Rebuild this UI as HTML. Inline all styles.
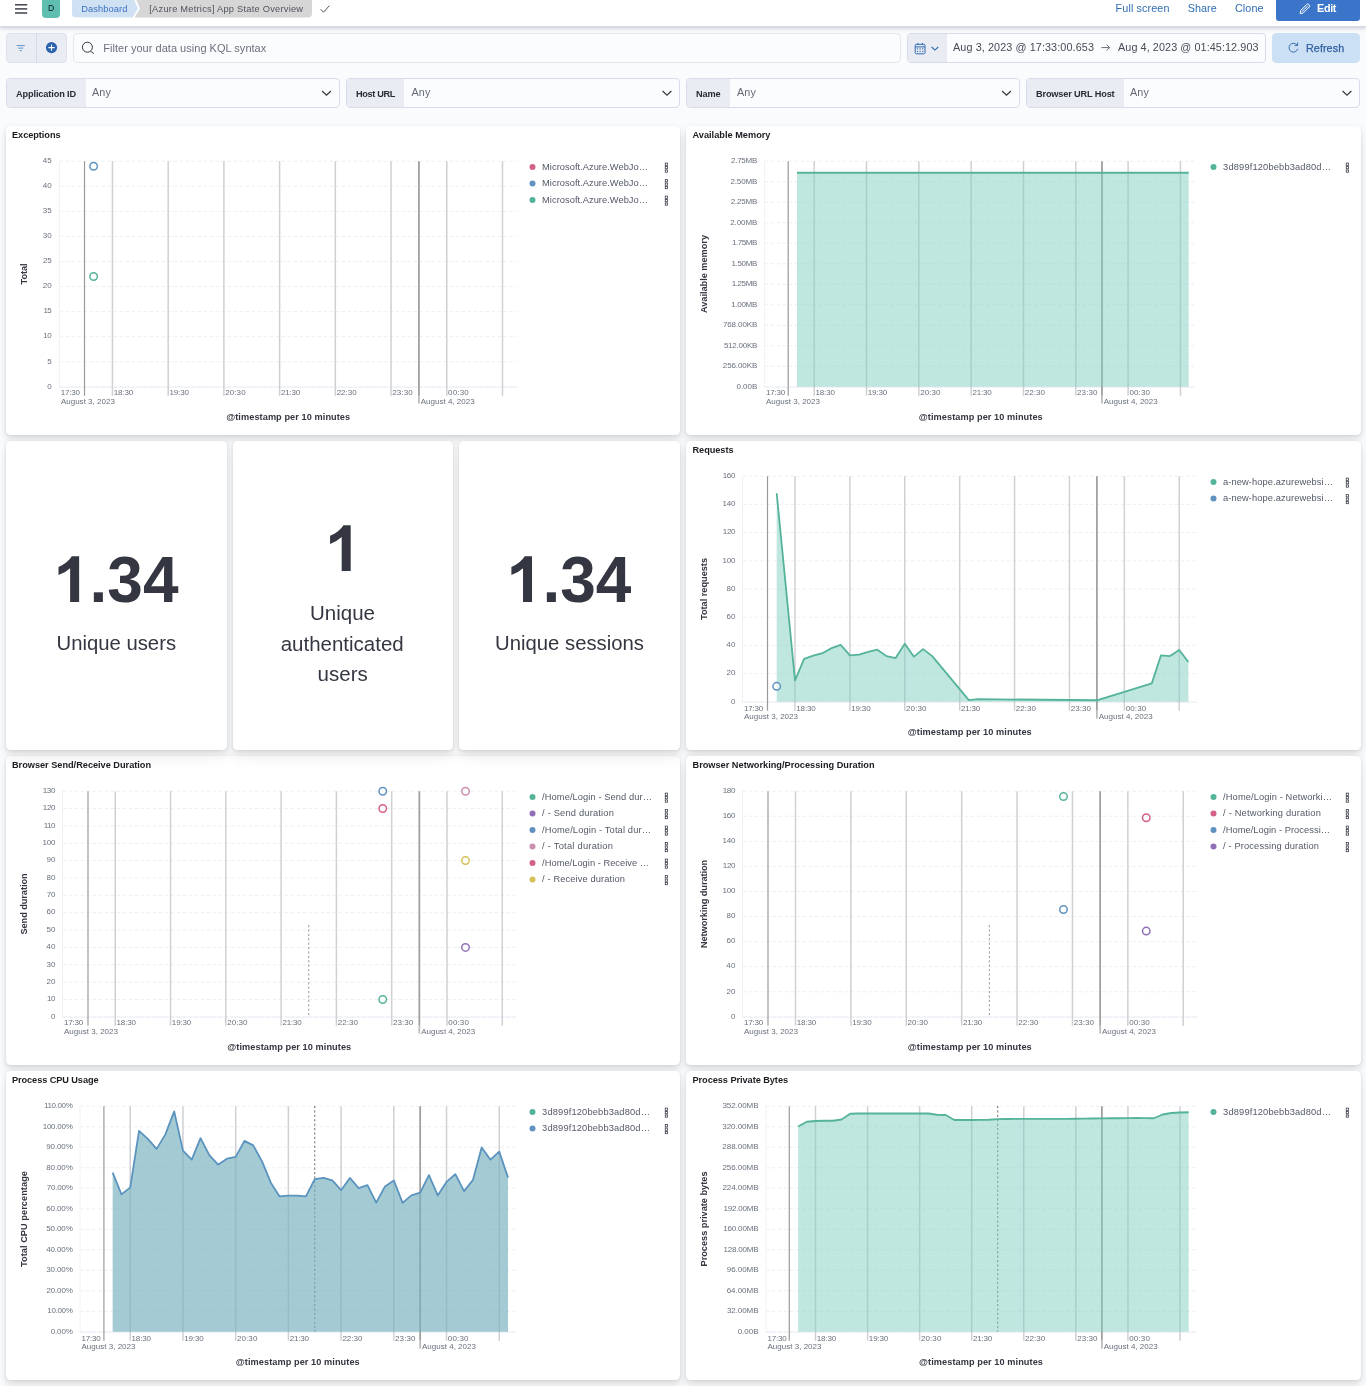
<!DOCTYPE html>
<html><head><meta charset="utf-8"><title>[Azure Metrics] App State Overview</title>
<style>
html,body{margin:0;padding:0}
body{width:1366px;height:1386px;position:relative;overflow:hidden;background:#fafbfd;font-family:"Liberation Sans",sans-serif}
.b{position:absolute;box-sizing:border-box}
.t{position:absolute;white-space:nowrap;margin:0;padding:0}
svg.g{position:absolute;left:0;top:0;overflow:hidden}
.tl{position:absolute;left:0;top:0;width:1366px;height:1386px;will-change:transform}
</style></head><body>
<div class="b" style="left:0px;top:0px;width:1366px;height:26.6px;background:#fff;border-bottom:1px solid #d3dae6;box-shadow:0 1px 3px rgba(60,70,100,.17),0 2px 5px rgba(60,70,100,.10);"></div>
<div class="b" style="left:42px;top:-4px;width:18px;height:22px;background:#5ebfb1;border-radius:4px;"></div>
<div class="b" style="left:1276px;top:-4px;width:84px;height:24.6px;background:#3a75c9;border-radius:3px;"></div>
<div class="b" style="left:6px;top:33px;width:60.6px;height:29.5px;background:#e9edf3;border-radius:4.5px;box-shadow:inset 0 0 0 1px rgba(17,43,134,.06);"></div>
<div class="b" style="left:36px;top:33px;width:1px;height:29.5px;background:#d3daea;"></div>
<div class="b" style="left:73px;top:33px;width:827.5px;height:29.5px;background:#fbfcfd;border-radius:4.5px;box-shadow:inset 0 0 0 1px #e3e7f0;"></div>
<div class="b" style="left:907px;top:33px;width:359px;height:29.5px;background:#fbfcfd;border-radius:4.5px;box-shadow:inset 0 0 0 1px #d6dcea;"></div>
<div class="b" style="left:908px;top:34px;width:39px;height:27.5px;background:#e9edf3;border-radius:3.5px 0 0 3.5px;"></div>
<div class="b" style="left:1272px;top:33px;width:88px;height:29.5px;background:#cce0f5;border-radius:4.5px;"></div>
<div class="b" style="left:6px;top:78px;width:333.5px;height:29.5px;background:#fbfcfd;border-radius:4.5px;box-shadow:inset 0 0 0 1px #d6dcea;"></div>
<div class="b" style="left:7px;top:79px;width:78.8px;height:27.5px;background:#e9edf3;border-radius:3.5px 0 0 3.5px;"></div>
<div class="b" style="left:346px;top:78px;width:334px;height:29.5px;background:#fbfcfd;border-radius:4.5px;box-shadow:inset 0 0 0 1px #d6dcea;"></div>
<div class="b" style="left:347px;top:79px;width:56.5px;height:27.5px;background:#e9edf3;border-radius:3.5px 0 0 3.5px;"></div>
<div class="b" style="left:686px;top:78px;width:333.5px;height:29.5px;background:#fbfcfd;border-radius:4.5px;box-shadow:inset 0 0 0 1px #d6dcea;"></div>
<div class="b" style="left:687px;top:79px;width:42.5px;height:27.5px;background:#e9edf3;border-radius:3.5px 0 0 3.5px;"></div>
<div class="b" style="left:1026px;top:78px;width:334px;height:29.5px;background:#fbfcfd;border-radius:4.5px;box-shadow:inset 0 0 0 1px #d6dcea;"></div>
<div class="b" style="left:1027px;top:79px;width:96.5px;height:27.5px;background:#e9edf3;border-radius:3.5px 0 0 3.5px;"></div>
<div class="b" style="left:6px;top:126px;width:674px;height:309px;background:#fff;border-radius:4.5px;box-shadow:0 .675px 3px -.75px rgba(0,0,0,.08),0 1.95px 6px -.75px rgba(0,0,0,.06),0 4.3px 9px -.75px rgba(0,0,0,.05),0 11.25px 11.25px -.75px rgba(0,0,0,.04);"></div>
<div class="b" style="left:686px;top:126px;width:675px;height:309px;background:#fff;border-radius:4.5px;box-shadow:0 .675px 3px -.75px rgba(0,0,0,.08),0 1.95px 6px -.75px rgba(0,0,0,.06),0 4.3px 9px -.75px rgba(0,0,0,.05),0 11.25px 11.25px -.75px rgba(0,0,0,.04);"></div>
<div class="b" style="left:686px;top:441px;width:675px;height:309px;background:#fff;border-radius:4.5px;box-shadow:0 .675px 3px -.75px rgba(0,0,0,.08),0 1.95px 6px -.75px rgba(0,0,0,.06),0 4.3px 9px -.75px rgba(0,0,0,.05),0 11.25px 11.25px -.75px rgba(0,0,0,.04);"></div>
<div class="b" style="left:6px;top:756px;width:674px;height:309px;background:#fff;border-radius:4.5px;box-shadow:0 .675px 3px -.75px rgba(0,0,0,.08),0 1.95px 6px -.75px rgba(0,0,0,.06),0 4.3px 9px -.75px rgba(0,0,0,.05),0 11.25px 11.25px -.75px rgba(0,0,0,.04);"></div>
<div class="b" style="left:686px;top:756px;width:675px;height:309px;background:#fff;border-radius:4.5px;box-shadow:0 .675px 3px -.75px rgba(0,0,0,.08),0 1.95px 6px -.75px rgba(0,0,0,.06),0 4.3px 9px -.75px rgba(0,0,0,.05),0 11.25px 11.25px -.75px rgba(0,0,0,.04);"></div>
<div class="b" style="left:6px;top:1071px;width:674px;height:309px;background:#fff;border-radius:4.5px;box-shadow:0 .675px 3px -.75px rgba(0,0,0,.08),0 1.95px 6px -.75px rgba(0,0,0,.06),0 4.3px 9px -.75px rgba(0,0,0,.05),0 11.25px 11.25px -.75px rgba(0,0,0,.04);"></div>
<div class="b" style="left:686px;top:1071px;width:675px;height:309px;background:#fff;border-radius:4.5px;box-shadow:0 .675px 3px -.75px rgba(0,0,0,.08),0 1.95px 6px -.75px rgba(0,0,0,.06),0 4.3px 9px -.75px rgba(0,0,0,.05),0 11.25px 11.25px -.75px rgba(0,0,0,.04);"></div>
<div class="b" style="left:6px;top:441px;width:221px;height:309px;background:#fff;border-radius:4.5px;box-shadow:0 .675px 3px -.75px rgba(0,0,0,.08),0 1.95px 6px -.75px rgba(0,0,0,.06),0 4.3px 9px -.75px rgba(0,0,0,.05),0 11.25px 11.25px -.75px rgba(0,0,0,.04);"></div>
<div class="b" style="left:233px;top:441px;width:220px;height:309px;background:#fff;border-radius:4.5px;box-shadow:0 .675px 3px -.75px rgba(0,0,0,.08),0 1.95px 6px -.75px rgba(0,0,0,.06),0 4.3px 9px -.75px rgba(0,0,0,.05),0 11.25px 11.25px -.75px rgba(0,0,0,.04);"></div>
<div class="b" style="left:459px;top:441px;width:221px;height:309px;background:#fff;border-radius:4.5px;box-shadow:0 .675px 3px -.75px rgba(0,0,0,.08),0 1.95px 6px -.75px rgba(0,0,0,.06),0 4.3px 9px -.75px rgba(0,0,0,.05),0 11.25px 11.25px -.75px rgba(0,0,0,.04);"></div>
<svg class="g" width="1366" height="1386" viewBox="0 0 1366 1386">
<rect x="15" y="4.1" width="12.2" height="1.4" fill="#343741"/>
<rect x="15" y="8.2" width="12.2" height="1.4" fill="#343741"/>
<rect x="15" y="12.3" width="12.2" height="1.4" fill="#343741"/>
<path d="M76 -4 H132.5 L138 8.5 L132.5 17.5 H76 a4 4 0 0 1 -4 -4 V0 Z" fill="#d1e1f4"/>
<path d="M134.5 -4 H308 a4 4 0 0 1 4 4 V13.5 a4 4 0 0 1 -4 4 H134.5 L140 8.5 Z" fill="#d6d6d6"/>
<path d="M320.6 9.2 L323.6 12.2 L329.4 5.6" fill="none" stroke="#4a4d57" stroke-width="0.95"/>
<g transform="translate(1299.6,3.2)" fill="none" stroke="#fff" stroke-width="1"><path d="M1 7.4 L7.2 1.2 a1.3 1.3 0 0 1 1.9 0 l0.6 0.6 a1.3 1.3 0 0 1 0 1.9 L3.5 9.9 L0.6 10.4 Z"/><path d="M2.2 8.6 L8.2 2.6"/></g>
<rect x="16.6" y="45.1" width="8.2" height="1" fill="#5a93d0"/>
<rect x="18.2" y="47.6" width="5" height="1" fill="#5a93d0"/>
<rect x="19.7" y="50.1" width="2.1" height="1" fill="#5a93d0"/>
<circle cx="51.5" cy="47.6" r="5.6" fill="#2b62ad"/><path d="M48.3 47.6 H54.7 M51.5 44.4 V50.8" stroke="#fff" stroke-width="1.1"/>
<circle cx="87.4" cy="47.2" r="5" fill="none" stroke="#343741" stroke-width="1"/><path d="M90.6 51.2 L93.8 53.6" stroke="#343741" stroke-width="1"/>
<g fill="none" stroke="#2c66b2" stroke-width="1"><rect x="915.2" y="44.3" width="9.8" height="9.5" rx="1.3"/><path d="M915.2 46.9 H925 M917.7 43 V44.5 M922.5 43 V44.5"/></g>
<rect x="916.9" y="48.35" width="1.2" height="1.1" fill="#2c66b2"/>
<rect x="916.9" y="50.85" width="1.2" height="1.1" fill="#2c66b2"/>
<rect x="919.5" y="48.35" width="1.2" height="1.1" fill="#2c66b2"/>
<rect x="919.5" y="50.85" width="1.2" height="1.1" fill="#2c66b2"/>
<rect x="922.1" y="48.35" width="1.2" height="1.1" fill="#2c66b2"/>
<rect x="922.1" y="50.85" width="1.2" height="1.1" fill="#2c66b2"/>
<path d="M931.6 47 L934.9 50.1 L938.2 47" fill="none" stroke="#2c66b2" stroke-width="1.1"/>
<path d="M1101.5 47.6 H1109.5 M1106.6 44.6 L1109.6 47.6 L1106.6 50.6" fill="none" stroke="#555b68" stroke-width="0.9"/>
<g fill="none" stroke="#3a6fae" stroke-width="1"><path d="M1297.2 45.4 A4.4 4.4 0 1 0 1297.7 48.8"/><path d="M1294.6 45.6 H1297.6 V42.6"/></g>
<path d="M322.1 91 L326.5 95.2 L330.9 91" fill="none" stroke="#343741" stroke-width="1.2"/>
<path d="M662.6 91 L667 95.2 L671.4 91" fill="none" stroke="#343741" stroke-width="1.2"/>
<path d="M1002.1 91 L1006.5 95.2 L1010.9 91" fill="none" stroke="#343741" stroke-width="1.2"/>
<path d="M1342.6 91 L1347 95.2 L1351.4 91" fill="none" stroke="#343741" stroke-width="1.2"/>
<path d="M79.13 602.10 L70.13 602.10 L70.13 568.19 Q65.19 572.82 58.50 575.04 L58.50 566.88 Q62.03 565.73 66.16 562.51 Q70.28 559.29 71.81 556.29 L79.13 556.29 Z" fill="#343741"/>
<path d="M350.69 571.00 L341.69 571.00 L341.69 537.09 Q336.75 541.72 330.06 543.94 L330.06 535.78 Q333.59 534.62 337.72 531.41 Q341.84 528.19 343.38 525.19 L350.69 525.19 Z" fill="#343741"/>
<path d="M532.03 602.10 L523.03 602.10 L523.03 568.19 Q518.09 572.82 511.40 575.04 L511.40 566.88 Q514.93 565.73 519.06 562.51 Q523.18 559.29 524.71 556.29 L532.03 556.29 Z" fill="#343741"/>
<path d="M59.4 386.8 H517" stroke="#e9ebf3" stroke-width="0.8" stroke-dasharray="3.6 2.4" fill="none"/>
<path d="M59.4 361.733 H517" stroke="#e9ebf3" stroke-width="0.8" stroke-dasharray="3.6 2.4" fill="none"/>
<path d="M59.4 336.667 H517" stroke="#e9ebf3" stroke-width="0.8" stroke-dasharray="3.6 2.4" fill="none"/>
<path d="M59.4 311.6 H517" stroke="#e9ebf3" stroke-width="0.8" stroke-dasharray="3.6 2.4" fill="none"/>
<path d="M59.4 286.533 H517" stroke="#e9ebf3" stroke-width="0.8" stroke-dasharray="3.6 2.4" fill="none"/>
<path d="M59.4 261.467 H517" stroke="#e9ebf3" stroke-width="0.8" stroke-dasharray="3.6 2.4" fill="none"/>
<path d="M59.4 236.4 H517" stroke="#e9ebf3" stroke-width="0.8" stroke-dasharray="3.6 2.4" fill="none"/>
<path d="M59.4 211.333 H517" stroke="#e9ebf3" stroke-width="0.8" stroke-dasharray="3.6 2.4" fill="none"/>
<path d="M59.4 186.267 H517" stroke="#e9ebf3" stroke-width="0.8" stroke-dasharray="3.6 2.4" fill="none"/>
<path d="M59.4 161.2 H517" stroke="#e9ebf3" stroke-width="0.8" stroke-dasharray="3.6 2.4" fill="none"/>
<path d="M59.4 161.2 V386.8" stroke="#f0f2f8" stroke-width="1"/>
<path d="M59.4 387.2 H517" stroke="#eceef6" stroke-width="1"/>
<path d="M112.45 161.2 V395.7" stroke="#d0d0d3" stroke-width="1.5"/>
<path d="M168.17 161.2 V395.7" stroke="#d0d0d3" stroke-width="1.5"/>
<path d="M223.89 161.2 V395.7" stroke="#d0d0d3" stroke-width="1.5"/>
<path d="M279.61 161.2 V395.7" stroke="#d0d0d3" stroke-width="1.5"/>
<path d="M335.33 161.2 V395.7" stroke="#d0d0d3" stroke-width="1.5"/>
<path d="M391.05 161.2 V395.7" stroke="#d0d0d3" stroke-width="1.5"/>
<path d="M446.77 161.2 V395.7" stroke="#d0d0d3" stroke-width="1.5"/>
<path d="M502.49 161.2 V395.7" stroke="#d0d0d3" stroke-width="1.5"/>
<path d="M84.5 161.2 V395.7" stroke="#9a9a9a" stroke-width="1.2"/>
<path d="M418.91 161.2 V395.7" stroke="#a0a0a0" stroke-width="1.8"/>
<path d="M418.91 395.7 V403.6" stroke="#bdbdbd" stroke-width="1.8"/>
<circle cx="532.5" cy="166.9" r="3" fill="#d36086"/>
<rect x="665.25" y="163.1" width="2.3" height="2.3" fill="none" stroke="#3d404b" stroke-width="0.8"/>
<rect x="665.25" y="166.5" width="2.3" height="2.3" fill="none" stroke="#3d404b" stroke-width="0.8"/>
<rect x="665.25" y="169.9" width="2.3" height="2.3" fill="none" stroke="#3d404b" stroke-width="0.8"/>
<circle cx="532.5" cy="183.4" r="3" fill="#6092c0"/>
<rect x="665.25" y="179.6" width="2.3" height="2.3" fill="none" stroke="#3d404b" stroke-width="0.8"/>
<rect x="665.25" y="183" width="2.3" height="2.3" fill="none" stroke="#3d404b" stroke-width="0.8"/>
<rect x="665.25" y="186.4" width="2.3" height="2.3" fill="none" stroke="#3d404b" stroke-width="0.8"/>
<circle cx="532.5" cy="199.9" r="3" fill="#54b399"/>
<rect x="665.25" y="196.1" width="2.3" height="2.3" fill="none" stroke="#3d404b" stroke-width="0.8"/>
<rect x="665.25" y="199.5" width="2.3" height="2.3" fill="none" stroke="#3d404b" stroke-width="0.8"/>
<rect x="665.25" y="202.9" width="2.3" height="2.3" fill="none" stroke="#3d404b" stroke-width="0.8"/>
<circle cx="93.6" cy="166.228" r="3.75" fill="#fff" fill-opacity="0.6" stroke="#6092c0" stroke-width="1.5"/>
<circle cx="93.6" cy="276.514" r="3.75" fill="#fff" fill-opacity="0.6" stroke="#54b399" stroke-width="1.5"/>
<path d="M764.5 386.8 H1194.5" stroke="#e9ebf3" stroke-width="0.8" stroke-dasharray="3.6 2.4" fill="none"/>
<path d="M764.5 366.291 H1194.5" stroke="#e9ebf3" stroke-width="0.8" stroke-dasharray="3.6 2.4" fill="none"/>
<path d="M764.5 345.782 H1194.5" stroke="#e9ebf3" stroke-width="0.8" stroke-dasharray="3.6 2.4" fill="none"/>
<path d="M764.5 325.273 H1194.5" stroke="#e9ebf3" stroke-width="0.8" stroke-dasharray="3.6 2.4" fill="none"/>
<path d="M764.5 304.764 H1194.5" stroke="#e9ebf3" stroke-width="0.8" stroke-dasharray="3.6 2.4" fill="none"/>
<path d="M764.5 284.255 H1194.5" stroke="#e9ebf3" stroke-width="0.8" stroke-dasharray="3.6 2.4" fill="none"/>
<path d="M764.5 263.745 H1194.5" stroke="#e9ebf3" stroke-width="0.8" stroke-dasharray="3.6 2.4" fill="none"/>
<path d="M764.5 243.236 H1194.5" stroke="#e9ebf3" stroke-width="0.8" stroke-dasharray="3.6 2.4" fill="none"/>
<path d="M764.5 222.727 H1194.5" stroke="#e9ebf3" stroke-width="0.8" stroke-dasharray="3.6 2.4" fill="none"/>
<path d="M764.5 202.218 H1194.5" stroke="#e9ebf3" stroke-width="0.8" stroke-dasharray="3.6 2.4" fill="none"/>
<path d="M764.5 181.709 H1194.5" stroke="#e9ebf3" stroke-width="0.8" stroke-dasharray="3.6 2.4" fill="none"/>
<path d="M764.5 161.2 H1194.5" stroke="#e9ebf3" stroke-width="0.8" stroke-dasharray="3.6 2.4" fill="none"/>
<path d="M764.5 161.2 V386.8" stroke="#f0f2f8" stroke-width="1"/>
<path d="M764.5 387.2 H1194.5" stroke="#eceef6" stroke-width="1"/>
<path d="M814.2 161.2 V395.7" stroke="#d0d0d3" stroke-width="1.5"/>
<path d="M866.52 161.2 V395.7" stroke="#d0d0d3" stroke-width="1.5"/>
<path d="M918.84 161.2 V395.7" stroke="#d0d0d3" stroke-width="1.5"/>
<path d="M971.16 161.2 V395.7" stroke="#d0d0d3" stroke-width="1.5"/>
<path d="M1023.48 161.2 V395.7" stroke="#d0d0d3" stroke-width="1.5"/>
<path d="M1075.8 161.2 V395.7" stroke="#d0d0d3" stroke-width="1.5"/>
<path d="M1128.12 161.2 V395.7" stroke="#d0d0d3" stroke-width="1.5"/>
<path d="M1180.44 161.2 V395.7" stroke="#d0d0d3" stroke-width="1.5"/>
<path d="M788.2 161.2 V395.7" stroke="#9a9a9a" stroke-width="1.2"/>
<path d="M1101.96 161.2 V395.7" stroke="#a0a0a0" stroke-width="1.8"/>
<path d="M1101.96 395.7 V403.6" stroke="#bdbdbd" stroke-width="1.8"/>
<path d="M797.00 172.75 L1188.70 172.75 L1188.70 386.80 L797.00 386.80 Z" fill="rgba(127,207,191,.5)"/><path d="M797.00 172.75 L1188.70 172.75" fill="none" stroke="#54b399" stroke-width="1.8" stroke-linejoin="round"/>
<circle cx="1213.5" cy="166.9" r="3" fill="#54b399"/>
<rect x="1346.25" y="163.1" width="2.3" height="2.3" fill="none" stroke="#3d404b" stroke-width="0.8"/>
<rect x="1346.25" y="166.5" width="2.3" height="2.3" fill="none" stroke="#3d404b" stroke-width="0.8"/>
<rect x="1346.25" y="169.9" width="2.3" height="2.3" fill="none" stroke="#3d404b" stroke-width="0.8"/>
<path d="M742.5 701.8 H1197" stroke="#e9ebf3" stroke-width="0.8" stroke-dasharray="3.6 2.4" fill="none"/>
<path d="M742.5 673.6 H1197" stroke="#e9ebf3" stroke-width="0.8" stroke-dasharray="3.6 2.4" fill="none"/>
<path d="M742.5 645.4 H1197" stroke="#e9ebf3" stroke-width="0.8" stroke-dasharray="3.6 2.4" fill="none"/>
<path d="M742.5 617.2 H1197" stroke="#e9ebf3" stroke-width="0.8" stroke-dasharray="3.6 2.4" fill="none"/>
<path d="M742.5 589 H1197" stroke="#e9ebf3" stroke-width="0.8" stroke-dasharray="3.6 2.4" fill="none"/>
<path d="M742.5 560.8 H1197" stroke="#e9ebf3" stroke-width="0.8" stroke-dasharray="3.6 2.4" fill="none"/>
<path d="M742.5 532.6 H1197" stroke="#e9ebf3" stroke-width="0.8" stroke-dasharray="3.6 2.4" fill="none"/>
<path d="M742.5 504.4 H1197" stroke="#e9ebf3" stroke-width="0.8" stroke-dasharray="3.6 2.4" fill="none"/>
<path d="M742.5 476.2 H1197" stroke="#e9ebf3" stroke-width="0.8" stroke-dasharray="3.6 2.4" fill="none"/>
<path d="M742.5 476.2 V701.8" stroke="#f0f2f8" stroke-width="1"/>
<path d="M742.5 702.2 H1197" stroke="#eceef6" stroke-width="1"/>
<path d="M795 476.2 V710.7" stroke="#d0d0d3" stroke-width="1.5"/>
<path d="M849.89 476.2 V710.7" stroke="#d0d0d3" stroke-width="1.5"/>
<path d="M904.78 476.2 V710.7" stroke="#d0d0d3" stroke-width="1.5"/>
<path d="M959.67 476.2 V710.7" stroke="#d0d0d3" stroke-width="1.5"/>
<path d="M1014.56 476.2 V710.7" stroke="#d0d0d3" stroke-width="1.5"/>
<path d="M1069.45 476.2 V710.7" stroke="#d0d0d3" stroke-width="1.5"/>
<path d="M1124.34 476.2 V710.7" stroke="#d0d0d3" stroke-width="1.5"/>
<path d="M1179.23 476.2 V710.7" stroke="#d0d0d3" stroke-width="1.5"/>
<path d="M767.5 476.2 V710.7" stroke="#9a9a9a" stroke-width="1.2"/>
<path d="M1096.89 476.2 V710.7" stroke="#a0a0a0" stroke-width="1.8"/>
<path d="M1096.89 710.7 V718.6" stroke="#bdbdbd" stroke-width="1.8"/>
<path d="M776.70 493.27 L795.00 680.31 L804.15 658.93 L813.30 655.70 L822.45 653.17 L831.59 648.10 L840.74 644.87 L849.89 655.42 L859.04 654.71 L868.19 651.90 L877.34 649.65 L886.48 656.12 L895.63 658.09 L904.78 643.74 L913.93 656.68 L923.08 649.09 L932.23 656.12 L968.82 700.13 L977.97 699.15 L1096.89 700.27 L1151.79 683.40 L1160.93 655.42 L1170.08 656.12 L1179.23 649.93 L1188.38 662.02 L1188.38 701.80 L776.70 701.80 Z" fill="rgba(127,207,191,.5)"/><path d="M776.70 493.27 L795.00 680.31 L804.15 658.93 L813.30 655.70 L822.45 653.17 L831.59 648.10 L840.74 644.87 L849.89 655.42 L859.04 654.71 L868.19 651.90 L877.34 649.65 L886.48 656.12 L895.63 658.09 L904.78 643.74 L913.93 656.68 L923.08 649.09 L932.23 656.12 L968.82 700.13 L977.97 699.15 L1096.89 700.27 L1151.79 683.40 L1160.93 655.42 L1170.08 656.12 L1179.23 649.93 L1188.38 662.02" fill="none" stroke="#54b399" stroke-width="1.8" stroke-linejoin="round"/>
<circle cx="776.7" cy="686.331" r="3.75" fill="#fff" fill-opacity="0.6" stroke="#6092c0" stroke-width="1.5"/>
<circle cx="1213.5" cy="481.9" r="3" fill="#54b399"/>
<rect x="1346.25" y="478.1" width="2.3" height="2.3" fill="none" stroke="#3d404b" stroke-width="0.8"/>
<rect x="1346.25" y="481.5" width="2.3" height="2.3" fill="none" stroke="#3d404b" stroke-width="0.8"/>
<rect x="1346.25" y="484.9" width="2.3" height="2.3" fill="none" stroke="#3d404b" stroke-width="0.8"/>
<circle cx="1213.5" cy="498.4" r="3" fill="#6092c0"/>
<rect x="1346.25" y="494.6" width="2.3" height="2.3" fill="none" stroke="#3d404b" stroke-width="0.8"/>
<rect x="1346.25" y="498" width="2.3" height="2.3" fill="none" stroke="#3d404b" stroke-width="0.8"/>
<rect x="1346.25" y="501.4" width="2.3" height="2.3" fill="none" stroke="#3d404b" stroke-width="0.8"/>
<path d="M62.5 1016.8 H516" stroke="#e9ebf3" stroke-width="0.8" stroke-dasharray="3.6 2.4" fill="none"/>
<path d="M62.5 999.446 H516" stroke="#e9ebf3" stroke-width="0.8" stroke-dasharray="3.6 2.4" fill="none"/>
<path d="M62.5 982.092 H516" stroke="#e9ebf3" stroke-width="0.8" stroke-dasharray="3.6 2.4" fill="none"/>
<path d="M62.5 964.738 H516" stroke="#e9ebf3" stroke-width="0.8" stroke-dasharray="3.6 2.4" fill="none"/>
<path d="M62.5 947.385 H516" stroke="#e9ebf3" stroke-width="0.8" stroke-dasharray="3.6 2.4" fill="none"/>
<path d="M62.5 930.031 H516" stroke="#e9ebf3" stroke-width="0.8" stroke-dasharray="3.6 2.4" fill="none"/>
<path d="M62.5 912.677 H516" stroke="#e9ebf3" stroke-width="0.8" stroke-dasharray="3.6 2.4" fill="none"/>
<path d="M62.5 895.323 H516" stroke="#e9ebf3" stroke-width="0.8" stroke-dasharray="3.6 2.4" fill="none"/>
<path d="M62.5 877.969 H516" stroke="#e9ebf3" stroke-width="0.8" stroke-dasharray="3.6 2.4" fill="none"/>
<path d="M62.5 860.615 H516" stroke="#e9ebf3" stroke-width="0.8" stroke-dasharray="3.6 2.4" fill="none"/>
<path d="M62.5 843.262 H516" stroke="#e9ebf3" stroke-width="0.8" stroke-dasharray="3.6 2.4" fill="none"/>
<path d="M62.5 825.908 H516" stroke="#e9ebf3" stroke-width="0.8" stroke-dasharray="3.6 2.4" fill="none"/>
<path d="M62.5 808.554 H516" stroke="#e9ebf3" stroke-width="0.8" stroke-dasharray="3.6 2.4" fill="none"/>
<path d="M62.5 791.2 H516" stroke="#e9ebf3" stroke-width="0.8" stroke-dasharray="3.6 2.4" fill="none"/>
<path d="M62.5 791.2 V1016.8" stroke="#f0f2f8" stroke-width="1"/>
<path d="M62.5 1017.2 H516" stroke="#eceef6" stroke-width="1"/>
<path d="M115.25 791.2 V1025.7" stroke="#d0d0d3" stroke-width="1.5"/>
<path d="M170.54 791.2 V1025.7" stroke="#d0d0d3" stroke-width="1.5"/>
<path d="M225.83 791.2 V1025.7" stroke="#d0d0d3" stroke-width="1.5"/>
<path d="M281.12 791.2 V1025.7" stroke="#d0d0d3" stroke-width="1.5"/>
<path d="M336.41 791.2 V1025.7" stroke="#d0d0d3" stroke-width="1.5"/>
<path d="M391.7 791.2 V1025.7" stroke="#d0d0d3" stroke-width="1.5"/>
<path d="M446.99 791.2 V1025.7" stroke="#d0d0d3" stroke-width="1.5"/>
<path d="M502.28 791.2 V1025.7" stroke="#d0d0d3" stroke-width="1.5"/>
<path d="M88 791.2 V1025.7" stroke="#9a9a9a" stroke-width="1.2"/>
<path d="M419.345 791.2 V1025.7" stroke="#a0a0a0" stroke-width="1.8"/>
<path d="M419.345 1025.7 V1033.6" stroke="#bdbdbd" stroke-width="1.8"/>
<path d="M308.765 925 V1016.8" stroke="#999" stroke-width="1" stroke-dasharray="2.2 2.2"/>
<circle cx="382.75" cy="791.2" r="3.75" fill="#fff" fill-opacity="0.6" stroke="#6092c0" stroke-width="1.5"/>
<circle cx="382.75" cy="808.554" r="3.75" fill="#fff" fill-opacity="0.6" stroke="#d36086" stroke-width="1.5"/>
<circle cx="382.75" cy="999.446" r="3.75" fill="#fff" fill-opacity="0.6" stroke="#54b399" stroke-width="1.5"/>
<circle cx="465.5" cy="791.2" r="3.75" fill="#fff" fill-opacity="0.6" stroke="#ca8eae" stroke-width="1.5"/>
<circle cx="465.5" cy="860.615" r="3.75" fill="#fff" fill-opacity="0.6" stroke="#d6bf57" stroke-width="1.5"/>
<circle cx="465.5" cy="947.385" r="3.75" fill="#fff" fill-opacity="0.6" stroke="#9170b8" stroke-width="1.5"/>
<circle cx="532.5" cy="796.9" r="3" fill="#54b399"/>
<rect x="665.25" y="793.1" width="2.3" height="2.3" fill="none" stroke="#3d404b" stroke-width="0.8"/>
<rect x="665.25" y="796.5" width="2.3" height="2.3" fill="none" stroke="#3d404b" stroke-width="0.8"/>
<rect x="665.25" y="799.9" width="2.3" height="2.3" fill="none" stroke="#3d404b" stroke-width="0.8"/>
<circle cx="532.5" cy="813.4" r="3" fill="#9170b8"/>
<rect x="665.25" y="809.6" width="2.3" height="2.3" fill="none" stroke="#3d404b" stroke-width="0.8"/>
<rect x="665.25" y="813" width="2.3" height="2.3" fill="none" stroke="#3d404b" stroke-width="0.8"/>
<rect x="665.25" y="816.4" width="2.3" height="2.3" fill="none" stroke="#3d404b" stroke-width="0.8"/>
<circle cx="532.5" cy="829.9" r="3" fill="#6092c0"/>
<rect x="665.25" y="826.1" width="2.3" height="2.3" fill="none" stroke="#3d404b" stroke-width="0.8"/>
<rect x="665.25" y="829.5" width="2.3" height="2.3" fill="none" stroke="#3d404b" stroke-width="0.8"/>
<rect x="665.25" y="832.9" width="2.3" height="2.3" fill="none" stroke="#3d404b" stroke-width="0.8"/>
<circle cx="532.5" cy="846.4" r="3" fill="#ca8eae"/>
<rect x="665.25" y="842.6" width="2.3" height="2.3" fill="none" stroke="#3d404b" stroke-width="0.8"/>
<rect x="665.25" y="846" width="2.3" height="2.3" fill="none" stroke="#3d404b" stroke-width="0.8"/>
<rect x="665.25" y="849.4" width="2.3" height="2.3" fill="none" stroke="#3d404b" stroke-width="0.8"/>
<circle cx="532.5" cy="862.9" r="3" fill="#d36086"/>
<rect x="665.25" y="859.1" width="2.3" height="2.3" fill="none" stroke="#3d404b" stroke-width="0.8"/>
<rect x="665.25" y="862.5" width="2.3" height="2.3" fill="none" stroke="#3d404b" stroke-width="0.8"/>
<rect x="665.25" y="865.9" width="2.3" height="2.3" fill="none" stroke="#3d404b" stroke-width="0.8"/>
<circle cx="532.5" cy="879.4" r="3" fill="#d6bf57"/>
<rect x="665.25" y="875.6" width="2.3" height="2.3" fill="none" stroke="#3d404b" stroke-width="0.8"/>
<rect x="665.25" y="879" width="2.3" height="2.3" fill="none" stroke="#3d404b" stroke-width="0.8"/>
<rect x="665.25" y="882.4" width="2.3" height="2.3" fill="none" stroke="#3d404b" stroke-width="0.8"/>
<path d="M742.5 1016.8 H1197" stroke="#e9ebf3" stroke-width="0.8" stroke-dasharray="3.6 2.4" fill="none"/>
<path d="M742.5 991.733 H1197" stroke="#e9ebf3" stroke-width="0.8" stroke-dasharray="3.6 2.4" fill="none"/>
<path d="M742.5 966.667 H1197" stroke="#e9ebf3" stroke-width="0.8" stroke-dasharray="3.6 2.4" fill="none"/>
<path d="M742.5 941.6 H1197" stroke="#e9ebf3" stroke-width="0.8" stroke-dasharray="3.6 2.4" fill="none"/>
<path d="M742.5 916.533 H1197" stroke="#e9ebf3" stroke-width="0.8" stroke-dasharray="3.6 2.4" fill="none"/>
<path d="M742.5 891.467 H1197" stroke="#e9ebf3" stroke-width="0.8" stroke-dasharray="3.6 2.4" fill="none"/>
<path d="M742.5 866.4 H1197" stroke="#e9ebf3" stroke-width="0.8" stroke-dasharray="3.6 2.4" fill="none"/>
<path d="M742.5 841.333 H1197" stroke="#e9ebf3" stroke-width="0.8" stroke-dasharray="3.6 2.4" fill="none"/>
<path d="M742.5 816.267 H1197" stroke="#e9ebf3" stroke-width="0.8" stroke-dasharray="3.6 2.4" fill="none"/>
<path d="M742.5 791.2 H1197" stroke="#e9ebf3" stroke-width="0.8" stroke-dasharray="3.6 2.4" fill="none"/>
<path d="M742.5 791.2 V1016.8" stroke="#f0f2f8" stroke-width="1"/>
<path d="M742.5 1017.2 H1197" stroke="#eceef6" stroke-width="1"/>
<path d="M795.5 791.2 V1025.7" stroke="#d0d0d3" stroke-width="1.5"/>
<path d="M850.89 791.2 V1025.7" stroke="#d0d0d3" stroke-width="1.5"/>
<path d="M906.28 791.2 V1025.7" stroke="#d0d0d3" stroke-width="1.5"/>
<path d="M961.67 791.2 V1025.7" stroke="#d0d0d3" stroke-width="1.5"/>
<path d="M1017.06 791.2 V1025.7" stroke="#d0d0d3" stroke-width="1.5"/>
<path d="M1072.45 791.2 V1025.7" stroke="#d0d0d3" stroke-width="1.5"/>
<path d="M1127.84 791.2 V1025.7" stroke="#d0d0d3" stroke-width="1.5"/>
<path d="M1183.23 791.2 V1025.7" stroke="#d0d0d3" stroke-width="1.5"/>
<path d="M768 791.2 V1025.7" stroke="#9a9a9a" stroke-width="1.2"/>
<path d="M1100.14 791.2 V1025.7" stroke="#a0a0a0" stroke-width="1.8"/>
<path d="M1100.14 1025.7 V1033.6" stroke="#bdbdbd" stroke-width="1.8"/>
<path d="M989.365 925 V1016.8" stroke="#999" stroke-width="1" stroke-dasharray="2.2 2.2"/>
<circle cx="1063.5" cy="796.464" r="3.75" fill="#fff" fill-opacity="0.6" stroke="#54b399" stroke-width="1.5"/>
<circle cx="1063.5" cy="909.515" r="3.75" fill="#fff" fill-opacity="0.6" stroke="#6092c0" stroke-width="1.5"/>
<circle cx="1146.25" cy="817.771" r="3.75" fill="#fff" fill-opacity="0.6" stroke="#d36086" stroke-width="1.5"/>
<circle cx="1146.25" cy="931.072" r="3.75" fill="#fff" fill-opacity="0.6" stroke="#9170b8" stroke-width="1.5"/>
<circle cx="1213.5" cy="796.9" r="3" fill="#54b399"/>
<rect x="1346.25" y="793.1" width="2.3" height="2.3" fill="none" stroke="#3d404b" stroke-width="0.8"/>
<rect x="1346.25" y="796.5" width="2.3" height="2.3" fill="none" stroke="#3d404b" stroke-width="0.8"/>
<rect x="1346.25" y="799.9" width="2.3" height="2.3" fill="none" stroke="#3d404b" stroke-width="0.8"/>
<circle cx="1213.5" cy="813.4" r="3" fill="#d36086"/>
<rect x="1346.25" y="809.6" width="2.3" height="2.3" fill="none" stroke="#3d404b" stroke-width="0.8"/>
<rect x="1346.25" y="813" width="2.3" height="2.3" fill="none" stroke="#3d404b" stroke-width="0.8"/>
<rect x="1346.25" y="816.4" width="2.3" height="2.3" fill="none" stroke="#3d404b" stroke-width="0.8"/>
<circle cx="1213.5" cy="829.9" r="3" fill="#6092c0"/>
<rect x="1346.25" y="826.1" width="2.3" height="2.3" fill="none" stroke="#3d404b" stroke-width="0.8"/>
<rect x="1346.25" y="829.5" width="2.3" height="2.3" fill="none" stroke="#3d404b" stroke-width="0.8"/>
<rect x="1346.25" y="832.9" width="2.3" height="2.3" fill="none" stroke="#3d404b" stroke-width="0.8"/>
<circle cx="1213.5" cy="846.4" r="3" fill="#9170b8"/>
<rect x="1346.25" y="842.6" width="2.3" height="2.3" fill="none" stroke="#3d404b" stroke-width="0.8"/>
<rect x="1346.25" y="846" width="2.3" height="2.3" fill="none" stroke="#3d404b" stroke-width="0.8"/>
<rect x="1346.25" y="849.4" width="2.3" height="2.3" fill="none" stroke="#3d404b" stroke-width="0.8"/>
<path d="M80 1331.8 H515.5" stroke="#e9ebf3" stroke-width="0.8" stroke-dasharray="3.6 2.4" fill="none"/>
<path d="M80 1311.29 H515.5" stroke="#e9ebf3" stroke-width="0.8" stroke-dasharray="3.6 2.4" fill="none"/>
<path d="M80 1290.78 H515.5" stroke="#e9ebf3" stroke-width="0.8" stroke-dasharray="3.6 2.4" fill="none"/>
<path d="M80 1270.27 H515.5" stroke="#e9ebf3" stroke-width="0.8" stroke-dasharray="3.6 2.4" fill="none"/>
<path d="M80 1249.76 H515.5" stroke="#e9ebf3" stroke-width="0.8" stroke-dasharray="3.6 2.4" fill="none"/>
<path d="M80 1229.25 H515.5" stroke="#e9ebf3" stroke-width="0.8" stroke-dasharray="3.6 2.4" fill="none"/>
<path d="M80 1208.75 H515.5" stroke="#e9ebf3" stroke-width="0.8" stroke-dasharray="3.6 2.4" fill="none"/>
<path d="M80 1188.24 H515.5" stroke="#e9ebf3" stroke-width="0.8" stroke-dasharray="3.6 2.4" fill="none"/>
<path d="M80 1167.73 H515.5" stroke="#e9ebf3" stroke-width="0.8" stroke-dasharray="3.6 2.4" fill="none"/>
<path d="M80 1147.22 H515.5" stroke="#e9ebf3" stroke-width="0.8" stroke-dasharray="3.6 2.4" fill="none"/>
<path d="M80 1126.71 H515.5" stroke="#e9ebf3" stroke-width="0.8" stroke-dasharray="3.6 2.4" fill="none"/>
<path d="M80 1106.2 H515.5" stroke="#e9ebf3" stroke-width="0.8" stroke-dasharray="3.6 2.4" fill="none"/>
<path d="M80 1106.2 V1331.8" stroke="#f0f2f8" stroke-width="1"/>
<path d="M80 1332.2 H515.5" stroke="#eceef6" stroke-width="1"/>
<path d="M130.25 1106.2 V1340.7" stroke="#d0d0d3" stroke-width="1.5"/>
<path d="M182.96 1106.2 V1340.7" stroke="#d0d0d3" stroke-width="1.5"/>
<path d="M235.67 1106.2 V1340.7" stroke="#d0d0d3" stroke-width="1.5"/>
<path d="M288.38 1106.2 V1340.7" stroke="#d0d0d3" stroke-width="1.5"/>
<path d="M341.09 1106.2 V1340.7" stroke="#d0d0d3" stroke-width="1.5"/>
<path d="M393.8 1106.2 V1340.7" stroke="#d0d0d3" stroke-width="1.5"/>
<path d="M446.51 1106.2 V1340.7" stroke="#d0d0d3" stroke-width="1.5"/>
<path d="M499.22 1106.2 V1340.7" stroke="#d0d0d3" stroke-width="1.5"/>
<path d="M103.9 1106.2 V1340.7" stroke="#9a9a9a" stroke-width="1.2"/>
<path d="M420.155 1106.2 V1340.7" stroke="#a0a0a0" stroke-width="1.8"/>
<path d="M420.155 1340.7 V1348.6" stroke="#bdbdbd" stroke-width="1.8"/>
<path d="M314.735 1106 V1331.8" stroke="#6e6e6e" stroke-width="1" stroke-dasharray="2.2 2.2"/>
<path d="M112.68 1172.65 L121.47 1194.40 L130.25 1187.40 L139.03 1130.90 L147.82 1138.90 L156.61 1148.90 L165.39 1134.40 L174.18 1111.40 L182.96 1150.65 L191.75 1159.65 L200.53 1138.15 L209.31 1155.15 L218.10 1164.65 L226.88 1158.65 L235.67 1156.90 L244.46 1140.90 L253.24 1145.40 L262.02 1161.40 L270.81 1182.65 L279.60 1196.40 L288.38 1195.65 L297.17 1195.65 L305.95 1196.40 L314.74 1179.15 L323.52 1177.90 L332.31 1180.40 L341.09 1190.15 L349.88 1177.90 L358.66 1188.15 L367.45 1185.15 L376.23 1202.65 L385.01 1186.40 L393.80 1180.40 L402.59 1202.90 L411.37 1195.40 L420.16 1192.65 L428.94 1175.15 L437.73 1195.40 L446.51 1181.90 L455.30 1174.15 L464.08 1191.15 L472.87 1180.15 L481.65 1147.40 L490.44 1159.65 L499.22 1151.65 L508.00 1177.65 L508.00 1331.80 L112.68 1331.80 Z" fill="rgba(121,178,190,.68)"/><path d="M112.68 1172.65 L121.47 1194.40 L130.25 1187.40 L139.03 1130.90 L147.82 1138.90 L156.61 1148.90 L165.39 1134.40 L174.18 1111.40 L182.96 1150.65 L191.75 1159.65 L200.53 1138.15 L209.31 1155.15 L218.10 1164.65 L226.88 1158.65 L235.67 1156.90 L244.46 1140.90 L253.24 1145.40 L262.02 1161.40 L270.81 1182.65 L279.60 1196.40 L288.38 1195.65 L297.17 1195.65 L305.95 1196.40 L314.74 1179.15 L323.52 1177.90 L332.31 1180.40 L341.09 1190.15 L349.88 1177.90 L358.66 1188.15 L367.45 1185.15 L376.23 1202.65 L385.01 1186.40 L393.80 1180.40 L402.59 1202.90 L411.37 1195.40 L420.16 1192.65 L428.94 1175.15 L437.73 1195.40 L446.51 1181.90 L455.30 1174.15 L464.08 1191.15 L472.87 1180.15 L481.65 1147.40 L490.44 1159.65 L499.22 1151.65 L508.00 1177.65" fill="none" stroke="#5b93bf" stroke-width="1.8" stroke-linejoin="round"/>
<circle cx="532.5" cy="1111.9" r="3" fill="#54b399"/>
<rect x="665.25" y="1108.1" width="2.3" height="2.3" fill="none" stroke="#3d404b" stroke-width="0.8"/>
<rect x="665.25" y="1111.5" width="2.3" height="2.3" fill="none" stroke="#3d404b" stroke-width="0.8"/>
<rect x="665.25" y="1114.9" width="2.3" height="2.3" fill="none" stroke="#3d404b" stroke-width="0.8"/>
<circle cx="532.5" cy="1128.4" r="3" fill="#6092c0"/>
<rect x="665.25" y="1124.6" width="2.3" height="2.3" fill="none" stroke="#3d404b" stroke-width="0.8"/>
<rect x="665.25" y="1128" width="2.3" height="2.3" fill="none" stroke="#3d404b" stroke-width="0.8"/>
<rect x="665.25" y="1131.4" width="2.3" height="2.3" fill="none" stroke="#3d404b" stroke-width="0.8"/>
<path d="M766 1331.8 H1196" stroke="#e9ebf3" stroke-width="0.8" stroke-dasharray="3.6 2.4" fill="none"/>
<path d="M766 1311.29 H1196" stroke="#e9ebf3" stroke-width="0.8" stroke-dasharray="3.6 2.4" fill="none"/>
<path d="M766 1290.78 H1196" stroke="#e9ebf3" stroke-width="0.8" stroke-dasharray="3.6 2.4" fill="none"/>
<path d="M766 1270.27 H1196" stroke="#e9ebf3" stroke-width="0.8" stroke-dasharray="3.6 2.4" fill="none"/>
<path d="M766 1249.76 H1196" stroke="#e9ebf3" stroke-width="0.8" stroke-dasharray="3.6 2.4" fill="none"/>
<path d="M766 1229.25 H1196" stroke="#e9ebf3" stroke-width="0.8" stroke-dasharray="3.6 2.4" fill="none"/>
<path d="M766 1208.75 H1196" stroke="#e9ebf3" stroke-width="0.8" stroke-dasharray="3.6 2.4" fill="none"/>
<path d="M766 1188.24 H1196" stroke="#e9ebf3" stroke-width="0.8" stroke-dasharray="3.6 2.4" fill="none"/>
<path d="M766 1167.73 H1196" stroke="#e9ebf3" stroke-width="0.8" stroke-dasharray="3.6 2.4" fill="none"/>
<path d="M766 1147.22 H1196" stroke="#e9ebf3" stroke-width="0.8" stroke-dasharray="3.6 2.4" fill="none"/>
<path d="M766 1126.71 H1196" stroke="#e9ebf3" stroke-width="0.8" stroke-dasharray="3.6 2.4" fill="none"/>
<path d="M766 1106.2 H1196" stroke="#e9ebf3" stroke-width="0.8" stroke-dasharray="3.6 2.4" fill="none"/>
<path d="M766 1106.2 V1331.8" stroke="#f0f2f8" stroke-width="1"/>
<path d="M766 1332.2 H1196" stroke="#eceef6" stroke-width="1"/>
<path d="M815.5 1106.2 V1340.7" stroke="#d0d0d3" stroke-width="1.5"/>
<path d="M867.57 1106.2 V1340.7" stroke="#d0d0d3" stroke-width="1.5"/>
<path d="M919.64 1106.2 V1340.7" stroke="#d0d0d3" stroke-width="1.5"/>
<path d="M971.71 1106.2 V1340.7" stroke="#d0d0d3" stroke-width="1.5"/>
<path d="M1023.78 1106.2 V1340.7" stroke="#d0d0d3" stroke-width="1.5"/>
<path d="M1075.85 1106.2 V1340.7" stroke="#d0d0d3" stroke-width="1.5"/>
<path d="M1127.92 1106.2 V1340.7" stroke="#d0d0d3" stroke-width="1.5"/>
<path d="M1179.99 1106.2 V1340.7" stroke="#d0d0d3" stroke-width="1.5"/>
<path d="M789.3 1106.2 V1340.7" stroke="#9a9a9a" stroke-width="1.2"/>
<path d="M1101.88 1106.2 V1340.7" stroke="#a0a0a0" stroke-width="1.8"/>
<path d="M1101.88 1340.7 V1348.6" stroke="#bdbdbd" stroke-width="1.8"/>
<path d="M997.745 1106 V1331.8" stroke="#6e6e6e" stroke-width="1" stroke-dasharray="2.2 2.2"/>
<path d="M798.14 1126.50 L806.82 1121.75 L815.50 1121.00 L824.18 1120.75 L832.86 1120.75 L841.53 1119.50 L850.21 1113.75 L858.89 1113.50 L867.57 1113.50 L876.25 1113.50 L884.93 1113.50 L893.61 1113.50 L902.28 1113.50 L910.96 1113.50 L919.64 1113.50 L928.32 1113.50 L937.00 1114.75 L945.67 1115.00 L954.35 1120.00 L963.03 1120.00 L971.71 1120.00 L980.39 1119.88 L989.07 1119.75 L997.75 1119.12 L1006.42 1119.00 L1015.10 1118.88 L1023.78 1118.88 L1032.46 1118.88 L1041.14 1118.88 L1049.82 1118.88 L1058.49 1118.88 L1067.17 1118.88 L1075.85 1118.75 L1084.53 1118.62 L1093.21 1118.50 L1101.88 1118.38 L1110.56 1118.25 L1119.24 1118.25 L1127.92 1118.12 L1136.60 1117.88 L1145.28 1118.12 L1153.95 1118.25 L1162.63 1114.50 L1171.31 1113.00 L1179.99 1112.50 L1188.67 1112.25 L1188.67 1331.80 L798.14 1331.80 Z" fill="rgba(127,207,191,.5)"/><path d="M798.14 1126.50 L806.82 1121.75 L815.50 1121.00 L824.18 1120.75 L832.86 1120.75 L841.53 1119.50 L850.21 1113.75 L858.89 1113.50 L867.57 1113.50 L876.25 1113.50 L884.93 1113.50 L893.61 1113.50 L902.28 1113.50 L910.96 1113.50 L919.64 1113.50 L928.32 1113.50 L937.00 1114.75 L945.67 1115.00 L954.35 1120.00 L963.03 1120.00 L971.71 1120.00 L980.39 1119.88 L989.07 1119.75 L997.75 1119.12 L1006.42 1119.00 L1015.10 1118.88 L1023.78 1118.88 L1032.46 1118.88 L1041.14 1118.88 L1049.82 1118.88 L1058.49 1118.88 L1067.17 1118.88 L1075.85 1118.75 L1084.53 1118.62 L1093.21 1118.50 L1101.88 1118.38 L1110.56 1118.25 L1119.24 1118.25 L1127.92 1118.12 L1136.60 1117.88 L1145.28 1118.12 L1153.95 1118.25 L1162.63 1114.50 L1171.31 1113.00 L1179.99 1112.50 L1188.67 1112.25" fill="none" stroke="#54b399" stroke-width="1.8" stroke-linejoin="round"/>
<circle cx="1213.5" cy="1111.9" r="3" fill="#54b399"/>
<rect x="1346.25" y="1108.1" width="2.3" height="2.3" fill="none" stroke="#3d404b" stroke-width="0.8"/>
<rect x="1346.25" y="1111.5" width="2.3" height="2.3" fill="none" stroke="#3d404b" stroke-width="0.8"/>
<rect x="1346.25" y="1114.9" width="2.3" height="2.3" fill="none" stroke="#3d404b" stroke-width="0.8"/>
</svg>
<div class="tl">
<div class="t" style="font-size:8.6px;color:#0b1a1a;left:51px;transform:translateX(-50%);top:3px;line-height:11px;">D</div>
<div class="t" style="font-size:9.3px;color:#3a73bf;letter-spacing:0.080px;left:81.3px;top:3px;line-height:12px;">Dashboard</div>
<div class="t" style="font-size:9.3px;color:#50545e;letter-spacing:0.228px;left:149.3px;top:3px;line-height:12px;">[Azure Metrics] App State Overview</div>
<div class="t" style="font-size:10.8px;color:#2f6db3;letter-spacing:0.108px;left:1115.6px;top:1px;line-height:14px;">Full screen</div>
<div class="t" style="font-size:10.8px;color:#2f6db3;letter-spacing:0.037px;left:1187.8px;top:1px;line-height:14px;">Share</div>
<div class="t" style="font-size:10.8px;color:#2f6db3;letter-spacing:0.076px;left:1235px;top:1px;line-height:14px;">Clone</div>
<div class="t" style="font-size:10.8px;color:#fff;font-weight:700;letter-spacing:-0.352px;left:1317.1px;top:1px;line-height:14px;">Edit</div>
<div class="t" style="font-size:11px;color:#6a717d;letter-spacing:0.023px;left:103.3px;top:41px;line-height:14px;">Filter your data using KQL syntax</div>
<div class="t" style="font-size:10.8px;color:#464b57;letter-spacing:0.106px;left:953px;top:40px;line-height:14px;">Aug 3, 2023 @ 17:33:00.653</div>
<div class="t" style="font-size:10.8px;color:#464b57;letter-spacing:0.090px;left:1118px;top:40px;line-height:14px;">Aug 4, 2023 @ 01:45:12.903</div>
<div class="t" style="font-size:10.8px;color:#2f5f9f;letter-spacing:0.055px;left:1306px;top:41px;line-height:14px;-webkit-text-stroke:0.25px #2f5f9f;">Refresh</div>
<div class="t" style="font-size:9.2px;color:#2a2d36;font-weight:700;letter-spacing:-0.126px;left:16px;top:88px;line-height:12px;">Application ID</div>
<div class="t" style="font-size:10.8px;color:#646a77;letter-spacing:0.130px;left:92px;top:85px;line-height:14px;">Any</div>
<div class="t" style="font-size:9.2px;color:#2a2d36;font-weight:700;letter-spacing:-0.357px;left:356px;top:88px;line-height:12px;">Host URL</div>
<div class="t" style="font-size:10.8px;color:#646a77;letter-spacing:0.130px;left:411.5px;top:85px;line-height:14px;">Any</div>
<div class="t" style="font-size:9.2px;color:#2a2d36;font-weight:700;letter-spacing:-0.133px;left:696px;top:88px;line-height:12px;">Name</div>
<div class="t" style="font-size:10.8px;color:#646a77;letter-spacing:0.130px;left:737px;top:85px;line-height:14px;">Any</div>
<div class="t" style="font-size:9.2px;color:#2a2d36;font-weight:700;letter-spacing:-0.157px;left:1036px;top:88px;line-height:12px;">Browser URL Host</div>
<div class="t" style="font-size:10.8px;color:#646a77;letter-spacing:0.130px;left:1130px;top:85px;line-height:14px;">Any</div>
<div class="t" style="font-size:64px;color:#343741;font-weight:700;left:89.54px;top:538.8px;line-height:83px;">.34</div>
<div class="t" style="font-size:20.3px;color:#343741;left:116.3px;transform:translateX(-50%);top:630px;line-height:26px;">Unique users</div>
<div class="t" style="font-size:20.5px;color:#343741;left:342.5px;transform:translateX(-50%);top:599px;line-height:27px;">Unique</div>
<div class="t" style="font-size:20.5px;color:#343741;left:342.2px;transform:translateX(-50%);top:630px;line-height:27px;">authenticated</div>
<div class="t" style="font-size:20.5px;color:#343741;left:342.7px;transform:translateX(-50%);top:660px;line-height:27px;">users</div>
<div class="t" style="font-size:64px;color:#343741;font-weight:700;left:542.44px;top:538.8px;line-height:83px;">.34</div>
<div class="t" style="font-size:20.3px;color:#343741;left:569.5px;transform:translateX(-50%);top:630px;line-height:26px;">Unique sessions</div>
<div class="t" style="font-size:9.2px;color:#1a1c21;font-weight:700;letter-spacing:-0.052px;left:12px;top:129px;line-height:12px;">Exceptions</div>
<div class="t" style="font-size:8px;color:#69707d;right:1314.2px;top:382px;line-height:10px;">0</div>
<div class="t" style="font-size:8px;color:#69707d;right:1314.2px;top:357px;line-height:10px;">5</div>
<div class="t" style="font-size:8px;color:#69707d;letter-spacing:-0.453px;right:1314.65px;top:331px;line-height:10px;">10</div>
<div class="t" style="font-size:8px;color:#69707d;letter-spacing:-0.553px;right:1314.75px;top:306px;line-height:10px;">15</div>
<div class="t" style="font-size:8px;color:#69707d;letter-spacing:0.097px;right:1314.1px;top:281px;line-height:10px;">20</div>
<div class="t" style="font-size:8px;color:#69707d;letter-spacing:-0.003px;right:1314.2px;top:256px;line-height:10px;">25</div>
<div class="t" style="font-size:8px;color:#69707d;letter-spacing:0.197px;right:1314px;top:231px;line-height:10px;">30</div>
<div class="t" style="font-size:8px;color:#69707d;letter-spacing:0.097px;right:1314.1px;top:206px;line-height:10px;">35</div>
<div class="t" style="font-size:8px;color:#69707d;letter-spacing:0.247px;right:1313.95px;top:181px;line-height:10px;">40</div>
<div class="t" style="font-size:8px;color:#69707d;letter-spacing:0.147px;right:1314.05px;top:156px;line-height:10px;">45</div>
<div class="t" style="font-size:8px;color:#69707d;letter-spacing:-0.206px;left:60.8px;top:388px;line-height:10px;">17:30</div>
<div class="t" style="font-size:8px;color:#69707d;letter-spacing:0.012px;left:60.9px;top:397px;line-height:10px;">August 3, 2023</div>
<div class="t" style="font-size:8px;color:#69707d;letter-spacing:-0.146px;left:113.75px;top:388px;line-height:10px;">18:30</div>
<div class="t" style="font-size:8px;color:#69707d;letter-spacing:-0.146px;left:169.47px;top:388px;line-height:10px;">19:30</div>
<div class="t" style="font-size:8px;color:#69707d;letter-spacing:0.094px;left:225.19px;top:388px;line-height:10px;">20:30</div>
<div class="t" style="font-size:8px;color:#69707d;letter-spacing:-0.186px;left:280.91px;top:388px;line-height:10px;">21:30</div>
<div class="t" style="font-size:8px;color:#69707d;letter-spacing:0.034px;left:336.63px;top:388px;line-height:10px;">22:30</div>
<div class="t" style="font-size:8px;color:#69707d;letter-spacing:0.074px;left:392.35px;top:388px;line-height:10px;">23:30</div>
<div class="t" style="font-size:8px;color:#69707d;letter-spacing:0.154px;left:448.07px;top:388px;line-height:10px;">00:30</div>
<div class="t" style="font-size:8px;color:#69707d;letter-spacing:0.012px;left:420.71px;top:397px;line-height:10px;">August 4, 2023</div>
<div class="t" style="font-size:9.2px;color:#343741;font-weight:700;letter-spacing:-0.053px;left:24px;top:274.3px;line-height:12px;transform:translate(-50%,-50%) rotate(-90deg);">Total</div>
<div class="t" style="font-size:9.2px;color:#343741;font-weight:700;letter-spacing:0.068px;left:288.234px;transform:translateX(-50%);top:411px;line-height:12px;">@timestamp per 10 minutes</div>
<div class="t" style="font-size:9.3px;color:#535966;letter-spacing:0.035px;left:542.1px;top:161px;line-height:12px;">Microsoft.Azure.WebJo…</div>
<div class="t" style="font-size:9.3px;color:#535966;letter-spacing:0.035px;left:542.1px;top:177px;line-height:12px;">Microsoft.Azure.WebJo…</div>
<div class="t" style="font-size:9.3px;color:#535966;letter-spacing:0.035px;left:542.1px;top:194px;line-height:12px;">Microsoft.Azure.WebJo…</div>
<div class="t" style="font-size:9.2px;color:#1a1c21;font-weight:700;letter-spacing:0.013px;left:692.5px;top:129px;line-height:12px;">Available Memory</div>
<div class="t" style="font-size:8px;color:#69707d;letter-spacing:-0.021px;right:608.721px;top:382px;line-height:10px;">0.00B</div>
<div class="t" style="font-size:8px;color:#69707d;letter-spacing:-0.086px;right:608.786px;top:361px;line-height:10px;">256.00KB</div>
<div class="t" style="font-size:8px;color:#69707d;letter-spacing:-0.249px;right:608.949px;top:341px;line-height:10px;">512.00KB</div>
<div class="t" style="font-size:8px;color:#69707d;letter-spacing:-0.111px;right:608.811px;top:320px;line-height:10px;">768.00KB</div>
<div class="t" style="font-size:8px;color:#69707d;letter-spacing:-0.296px;right:608.996px;top:300px;line-height:10px;">1.00MB</div>
<div class="t" style="font-size:8px;color:#69707d;letter-spacing:-0.380px;right:609.08px;top:279px;line-height:10px;">1.25MB</div>
<div class="t" style="font-size:8px;color:#69707d;letter-spacing:-0.330px;right:609.03px;top:259px;line-height:10px;">1.50MB</div>
<div class="t" style="font-size:8px;color:#69707d;letter-spacing:-0.430px;right:609.13px;top:238px;line-height:10px;">1.75MB</div>
<div class="t" style="font-size:8px;color:#69707d;letter-spacing:-0.113px;right:608.813px;top:218px;line-height:10px;">2.00MB</div>
<div class="t" style="font-size:8px;color:#69707d;letter-spacing:-0.196px;right:608.896px;top:197px;line-height:10px;">2.25MB</div>
<div class="t" style="font-size:8px;color:#69707d;letter-spacing:-0.146px;right:608.846px;top:177px;line-height:10px;">2.50MB</div>
<div class="t" style="font-size:8px;color:#69707d;letter-spacing:-0.246px;right:608.946px;top:156px;line-height:10px;">2.75MB</div>
<div class="t" style="font-size:8px;color:#69707d;letter-spacing:-0.206px;left:765.9px;top:388px;line-height:10px;">17:30</div>
<div class="t" style="font-size:8px;color:#69707d;letter-spacing:0.012px;left:766px;top:397px;line-height:10px;">August 3, 2023</div>
<div class="t" style="font-size:8px;color:#69707d;letter-spacing:-0.146px;left:815.5px;top:388px;line-height:10px;">18:30</div>
<div class="t" style="font-size:8px;color:#69707d;letter-spacing:-0.146px;left:867.82px;top:388px;line-height:10px;">19:30</div>
<div class="t" style="font-size:8px;color:#69707d;letter-spacing:0.094px;left:920.14px;top:388px;line-height:10px;">20:30</div>
<div class="t" style="font-size:8px;color:#69707d;letter-spacing:-0.186px;left:972.46px;top:388px;line-height:10px;">21:30</div>
<div class="t" style="font-size:8px;color:#69707d;letter-spacing:0.034px;left:1024.78px;top:388px;line-height:10px;">22:30</div>
<div class="t" style="font-size:8px;color:#69707d;letter-spacing:0.074px;left:1077.1px;top:388px;line-height:10px;">23:30</div>
<div class="t" style="font-size:8px;color:#69707d;letter-spacing:0.154px;left:1129.42px;top:388px;line-height:10px;">00:30</div>
<div class="t" style="font-size:8px;color:#69707d;letter-spacing:0.012px;left:1103.76px;top:397px;line-height:10px;">August 4, 2023</div>
<div class="t" style="font-size:9.2px;color:#343741;font-weight:700;letter-spacing:-0.020px;left:704.2px;top:274.3px;line-height:12px;transform:translate(-50%,-50%) rotate(-90deg);">Available memory</div>
<div class="t" style="font-size:9.2px;color:#343741;font-weight:700;letter-spacing:0.068px;left:980.784px;transform:translateX(-50%);top:411px;line-height:12px;">@timestamp per 10 minutes</div>
<div class="t" style="font-size:9.3px;color:#535966;letter-spacing:0.152px;left:1223.1px;top:161px;line-height:12px;">3d899f120bebb3ad80d…</div>
<div class="t" style="font-size:9.2px;color:#1a1c21;font-weight:700;letter-spacing:-0.045px;left:692.5px;top:444px;line-height:12px;">Requests</div>
<div class="t" style="font-size:8px;color:#69707d;right:630.5px;top:697px;line-height:10px;">0</div>
<div class="t" style="font-size:8px;color:#69707d;letter-spacing:0.097px;right:630.403px;top:668px;line-height:10px;">20</div>
<div class="t" style="font-size:8px;color:#69707d;letter-spacing:0.247px;right:630.253px;top:640px;line-height:10px;">40</div>
<div class="t" style="font-size:8px;color:#69707d;letter-spacing:0.197px;right:630.303px;top:612px;line-height:10px;">60</div>
<div class="t" style="font-size:8px;color:#69707d;letter-spacing:0.197px;right:630.303px;top:584px;line-height:10px;">80</div>
<div class="t" style="font-size:8px;color:#69707d;letter-spacing:-0.220px;right:630.72px;top:556px;line-height:10px;">100</div>
<div class="t" style="font-size:8px;color:#69707d;letter-spacing:-0.320px;right:630.82px;top:527px;line-height:10px;">120</div>
<div class="t" style="font-size:8px;color:#69707d;letter-spacing:-0.220px;right:630.72px;top:499px;line-height:10px;">140</div>
<div class="t" style="font-size:8px;color:#69707d;letter-spacing:-0.253px;right:630.753px;top:471px;line-height:10px;">160</div>
<div class="t" style="font-size:8px;color:#69707d;letter-spacing:-0.206px;left:743.9px;top:704px;line-height:10px;">17:30</div>
<div class="t" style="font-size:8px;color:#69707d;letter-spacing:0.012px;left:744px;top:712px;line-height:10px;">August 3, 2023</div>
<div class="t" style="font-size:8px;color:#69707d;letter-spacing:-0.146px;left:796.3px;top:704px;line-height:10px;">18:30</div>
<div class="t" style="font-size:8px;color:#69707d;letter-spacing:-0.146px;left:851.19px;top:704px;line-height:10px;">19:30</div>
<div class="t" style="font-size:8px;color:#69707d;letter-spacing:0.094px;left:906.08px;top:704px;line-height:10px;">20:30</div>
<div class="t" style="font-size:8px;color:#69707d;letter-spacing:-0.186px;left:960.97px;top:704px;line-height:10px;">21:30</div>
<div class="t" style="font-size:8px;color:#69707d;letter-spacing:0.034px;left:1015.86px;top:704px;line-height:10px;">22:30</div>
<div class="t" style="font-size:8px;color:#69707d;letter-spacing:0.074px;left:1070.75px;top:704px;line-height:10px;">23:30</div>
<div class="t" style="font-size:8px;color:#69707d;letter-spacing:0.154px;left:1125.64px;top:704px;line-height:10px;">00:30</div>
<div class="t" style="font-size:8px;color:#69707d;letter-spacing:0.012px;left:1098.69px;top:712px;line-height:10px;">August 4, 2023</div>
<div class="t" style="font-size:9.2px;color:#343741;font-weight:700;letter-spacing:-0.009px;left:704px;top:589.3px;line-height:12px;transform:translate(-50%,-50%) rotate(-90deg);">Total requests</div>
<div class="t" style="font-size:9.2px;color:#343741;font-weight:700;letter-spacing:0.068px;left:969.784px;transform:translateX(-50%);top:726px;line-height:12px;">@timestamp per 10 minutes</div>
<div class="t" style="font-size:9.3px;color:#535966;letter-spacing:0.090px;left:1223.1px;top:476px;line-height:12px;">a-new-hope.azurewebsi…</div>
<div class="t" style="font-size:9.3px;color:#535966;letter-spacing:0.090px;left:1223.1px;top:492px;line-height:12px;">a-new-hope.azurewebsi…</div>
<div class="t" style="font-size:9.2px;color:#1a1c21;font-weight:700;letter-spacing:-0.013px;left:12px;top:759px;line-height:12px;">Browser Send/Receive Duration</div>
<div class="t" style="font-size:8px;color:#69707d;right:1310.5px;top:1012px;line-height:10px;">0</div>
<div class="t" style="font-size:8px;color:#69707d;letter-spacing:-0.453px;right:1310.95px;top:994px;line-height:10px;">10</div>
<div class="t" style="font-size:8px;color:#69707d;letter-spacing:0.097px;right:1310.4px;top:977px;line-height:10px;">20</div>
<div class="t" style="font-size:8px;color:#69707d;letter-spacing:0.197px;right:1310.3px;top:960px;line-height:10px;">30</div>
<div class="t" style="font-size:8px;color:#69707d;letter-spacing:0.247px;right:1310.25px;top:942px;line-height:10px;">40</div>
<div class="t" style="font-size:8px;color:#69707d;letter-spacing:0.147px;right:1310.35px;top:925px;line-height:10px;">50</div>
<div class="t" style="font-size:8px;color:#69707d;letter-spacing:0.197px;right:1310.3px;top:907px;line-height:10px;">60</div>
<div class="t" style="font-size:8px;color:#69707d;letter-spacing:-0.053px;right:1310.55px;top:890px;line-height:10px;">70</div>
<div class="t" style="font-size:8px;color:#69707d;letter-spacing:0.197px;right:1310.3px;top:873px;line-height:10px;">80</div>
<div class="t" style="font-size:8px;color:#69707d;letter-spacing:0.197px;right:1310.3px;top:855px;line-height:10px;">90</div>
<div class="t" style="font-size:8px;color:#69707d;letter-spacing:-0.220px;right:1310.72px;top:838px;line-height:10px;">100</div>
<div class="t" style="font-size:8px;color:#69707d;letter-spacing:-0.489px;right:1310.99px;top:821px;line-height:10px;">110</div>
<div class="t" style="font-size:8px;color:#69707d;letter-spacing:-0.320px;right:1310.82px;top:803px;line-height:10px;">120</div>
<div class="t" style="font-size:8px;color:#69707d;letter-spacing:-0.253px;right:1310.75px;top:786px;line-height:10px;">130</div>
<div class="t" style="font-size:8px;color:#69707d;letter-spacing:-0.206px;left:63.9px;top:1018px;line-height:10px;">17:30</div>
<div class="t" style="font-size:8px;color:#69707d;letter-spacing:0.012px;left:64px;top:1027px;line-height:10px;">August 3, 2023</div>
<div class="t" style="font-size:8px;color:#69707d;letter-spacing:-0.146px;left:116.55px;top:1018px;line-height:10px;">18:30</div>
<div class="t" style="font-size:8px;color:#69707d;letter-spacing:-0.146px;left:171.84px;top:1018px;line-height:10px;">19:30</div>
<div class="t" style="font-size:8px;color:#69707d;letter-spacing:0.094px;left:227.13px;top:1018px;line-height:10px;">20:30</div>
<div class="t" style="font-size:8px;color:#69707d;letter-spacing:-0.186px;left:282.42px;top:1018px;line-height:10px;">21:30</div>
<div class="t" style="font-size:8px;color:#69707d;letter-spacing:0.034px;left:337.71px;top:1018px;line-height:10px;">22:30</div>
<div class="t" style="font-size:8px;color:#69707d;letter-spacing:0.074px;left:393px;top:1018px;line-height:10px;">23:30</div>
<div class="t" style="font-size:8px;color:#69707d;letter-spacing:0.154px;left:448.29px;top:1018px;line-height:10px;">00:30</div>
<div class="t" style="font-size:8px;color:#69707d;letter-spacing:0.012px;left:421.145px;top:1027px;line-height:10px;">August 4, 2023</div>
<div class="t" style="font-size:9.2px;color:#343741;font-weight:700;letter-spacing:-0.059px;left:24px;top:904.3px;line-height:12px;transform:translate(-50%,-50%) rotate(-90deg);">Send duration</div>
<div class="t" style="font-size:9.2px;color:#343741;font-weight:700;letter-spacing:0.068px;left:289.284px;transform:translateX(-50%);top:1041px;line-height:12px;">@timestamp per 10 minutes</div>
<div class="t" style="font-size:9.3px;color:#535966;letter-spacing:0.086px;left:542.1px;top:791px;line-height:12px;">/Home/Login - Send dur…</div>
<div class="t" style="font-size:9.3px;color:#535966;letter-spacing:0.191px;left:542.1px;top:807px;line-height:12px;">/ - Send duration</div>
<div class="t" style="font-size:9.3px;color:#535966;letter-spacing:0.135px;left:542.1px;top:824px;line-height:12px;">/Home/Login - Total dur…</div>
<div class="t" style="font-size:9.3px;color:#535966;letter-spacing:0.250px;left:542.1px;top:840px;line-height:12px;">/ - Total duration</div>
<div class="t" style="font-size:9.3px;color:#535966;letter-spacing:0.024px;left:542.1px;top:857px;line-height:12px;">/Home/Login - Receive …</div>
<div class="t" style="font-size:9.3px;color:#535966;letter-spacing:0.119px;left:542.1px;top:873px;line-height:12px;">/ - Receive duration</div>
<div class="t" style="font-size:9.2px;color:#1a1c21;font-weight:700;letter-spacing:0.007px;left:692.5px;top:759px;line-height:12px;">Browser Networking/Processing Duration</div>
<div class="t" style="font-size:8px;color:#69707d;right:630.5px;top:1012px;line-height:10px;">0</div>
<div class="t" style="font-size:8px;color:#69707d;letter-spacing:0.097px;right:630.403px;top:987px;line-height:10px;">20</div>
<div class="t" style="font-size:8px;color:#69707d;letter-spacing:0.247px;right:630.253px;top:961px;line-height:10px;">40</div>
<div class="t" style="font-size:8px;color:#69707d;letter-spacing:0.197px;right:630.303px;top:936px;line-height:10px;">60</div>
<div class="t" style="font-size:8px;color:#69707d;letter-spacing:0.197px;right:630.303px;top:911px;line-height:10px;">80</div>
<div class="t" style="font-size:8px;color:#69707d;letter-spacing:-0.220px;right:630.72px;top:886px;line-height:10px;">100</div>
<div class="t" style="font-size:8px;color:#69707d;letter-spacing:-0.320px;right:630.82px;top:861px;line-height:10px;">120</div>
<div class="t" style="font-size:8px;color:#69707d;letter-spacing:-0.220px;right:630.72px;top:836px;line-height:10px;">140</div>
<div class="t" style="font-size:8px;color:#69707d;letter-spacing:-0.253px;right:630.753px;top:811px;line-height:10px;">160</div>
<div class="t" style="font-size:8px;color:#69707d;letter-spacing:-0.253px;right:630.753px;top:786px;line-height:10px;">180</div>
<div class="t" style="font-size:8px;color:#69707d;letter-spacing:-0.206px;left:743.9px;top:1018px;line-height:10px;">17:30</div>
<div class="t" style="font-size:8px;color:#69707d;letter-spacing:0.012px;left:744px;top:1027px;line-height:10px;">August 3, 2023</div>
<div class="t" style="font-size:8px;color:#69707d;letter-spacing:-0.146px;left:796.8px;top:1018px;line-height:10px;">18:30</div>
<div class="t" style="font-size:8px;color:#69707d;letter-spacing:-0.146px;left:852.19px;top:1018px;line-height:10px;">19:30</div>
<div class="t" style="font-size:8px;color:#69707d;letter-spacing:0.094px;left:907.58px;top:1018px;line-height:10px;">20:30</div>
<div class="t" style="font-size:8px;color:#69707d;letter-spacing:-0.186px;left:962.97px;top:1018px;line-height:10px;">21:30</div>
<div class="t" style="font-size:8px;color:#69707d;letter-spacing:0.034px;left:1018.36px;top:1018px;line-height:10px;">22:30</div>
<div class="t" style="font-size:8px;color:#69707d;letter-spacing:0.074px;left:1073.75px;top:1018px;line-height:10px;">23:30</div>
<div class="t" style="font-size:8px;color:#69707d;letter-spacing:0.154px;left:1129.14px;top:1018px;line-height:10px;">00:30</div>
<div class="t" style="font-size:8px;color:#69707d;letter-spacing:0.012px;left:1101.94px;top:1027px;line-height:10px;">August 4, 2023</div>
<div class="t" style="font-size:9.2px;color:#343741;font-weight:700;letter-spacing:-0.070px;left:704px;top:904.3px;line-height:12px;transform:translate(-50%,-50%) rotate(-90deg);">Networking duration</div>
<div class="t" style="font-size:9.2px;color:#343741;font-weight:700;letter-spacing:0.068px;left:969.784px;transform:translateX(-50%);top:1041px;line-height:12px;">@timestamp per 10 minutes</div>
<div class="t" style="font-size:9.3px;color:#535966;letter-spacing:0.111px;left:1223.1px;top:791px;line-height:12px;">/Home/Login - Networki…</div>
<div class="t" style="font-size:9.3px;color:#535966;letter-spacing:0.194px;left:1223.1px;top:807px;line-height:12px;">/ - Networking duration</div>
<div class="t" style="font-size:9.3px;color:#535966;letter-spacing:0.047px;left:1223.1px;top:824px;line-height:12px;">/Home/Login - Processi…</div>
<div class="t" style="font-size:9.3px;color:#535966;letter-spacing:0.130px;left:1223.1px;top:840px;line-height:12px;">/ - Processing duration</div>
<div class="t" style="font-size:9.2px;color:#1a1c21;font-weight:700;letter-spacing:-0.079px;left:12px;top:1074px;line-height:12px;">Process CPU Usage</div>
<div class="t" style="font-size:8px;color:#69707d;letter-spacing:-0.157px;right:1293.36px;top:1327px;line-height:10px;">0.00%</div>
<div class="t" style="font-size:8px;color:#69707d;letter-spacing:-0.323px;right:1293.52px;top:1306px;line-height:10px;">10.00%</div>
<div class="t" style="font-size:8px;color:#69707d;letter-spacing:-0.140px;right:1293.34px;top:1286px;line-height:10px;">20.00%</div>
<div class="t" style="font-size:8px;color:#69707d;letter-spacing:-0.107px;right:1293.31px;top:1265px;line-height:10px;">30.00%</div>
<div class="t" style="font-size:8px;color:#69707d;letter-spacing:-0.090px;right:1293.29px;top:1245px;line-height:10px;">40.00%</div>
<div class="t" style="font-size:8px;color:#69707d;letter-spacing:-0.123px;right:1293.32px;top:1224px;line-height:10px;">50.00%</div>
<div class="t" style="font-size:8px;color:#69707d;letter-spacing:-0.107px;right:1293.31px;top:1204px;line-height:10px;">60.00%</div>
<div class="t" style="font-size:8px;color:#69707d;letter-spacing:-0.190px;right:1293.39px;top:1183px;line-height:10px;">70.00%</div>
<div class="t" style="font-size:8px;color:#69707d;letter-spacing:-0.107px;right:1293.31px;top:1163px;line-height:10px;">80.00%</div>
<div class="t" style="font-size:8px;color:#69707d;letter-spacing:-0.107px;right:1293.31px;top:1142px;line-height:10px;">90.00%</div>
<div class="t" style="font-size:8px;color:#69707d;letter-spacing:-0.242px;right:1293.44px;top:1122px;line-height:10px;">100.00%</div>
<div class="t" style="font-size:8px;color:#69707d;letter-spacing:-0.357px;right:1293.56px;top:1101px;line-height:10px;">110.00%</div>
<div class="t" style="font-size:8px;color:#69707d;letter-spacing:-0.206px;left:81.4px;top:1334px;line-height:10px;">17:30</div>
<div class="t" style="font-size:8px;color:#69707d;letter-spacing:0.012px;left:81.5px;top:1342px;line-height:10px;">August 3, 2023</div>
<div class="t" style="font-size:8px;color:#69707d;letter-spacing:-0.146px;left:131.55px;top:1334px;line-height:10px;">18:30</div>
<div class="t" style="font-size:8px;color:#69707d;letter-spacing:-0.146px;left:184.26px;top:1334px;line-height:10px;">19:30</div>
<div class="t" style="font-size:8px;color:#69707d;letter-spacing:0.094px;left:236.97px;top:1334px;line-height:10px;">20:30</div>
<div class="t" style="font-size:8px;color:#69707d;letter-spacing:-0.186px;left:289.68px;top:1334px;line-height:10px;">21:30</div>
<div class="t" style="font-size:8px;color:#69707d;letter-spacing:0.034px;left:342.39px;top:1334px;line-height:10px;">22:30</div>
<div class="t" style="font-size:8px;color:#69707d;letter-spacing:0.074px;left:395.1px;top:1334px;line-height:10px;">23:30</div>
<div class="t" style="font-size:8px;color:#69707d;letter-spacing:0.154px;left:447.81px;top:1334px;line-height:10px;">00:30</div>
<div class="t" style="font-size:8px;color:#69707d;letter-spacing:0.012px;left:421.955px;top:1342px;line-height:10px;">August 4, 2023</div>
<div class="t" style="font-size:9.2px;color:#343741;font-weight:700;letter-spacing:0.060px;left:24px;top:1219.3px;line-height:12px;transform:translate(-50%,-50%) rotate(-90deg);">Total CPU percentage</div>
<div class="t" style="font-size:9.2px;color:#343741;font-weight:700;letter-spacing:0.068px;left:297.784px;transform:translateX(-50%);top:1356px;line-height:12px;">@timestamp per 10 minutes</div>
<div class="t" style="font-size:9.3px;color:#535966;letter-spacing:0.152px;left:542.1px;top:1106px;line-height:12px;">3d899f120bebb3ad80d…</div>
<div class="t" style="font-size:9.3px;color:#535966;letter-spacing:0.152px;left:542.1px;top:1122px;line-height:12px;">3d899f120bebb3ad80d…</div>
<div class="t" style="font-size:9.2px;color:#1a1c21;font-weight:700;letter-spacing:-0.049px;left:692.5px;top:1074px;line-height:12px;">Process Private Bytes</div>
<div class="t" style="font-size:8px;color:#69707d;letter-spacing:-0.021px;right:607.521px;top:1327px;line-height:10px;">0.00B</div>
<div class="t" style="font-size:8px;color:#69707d;letter-spacing:-0.076px;right:607.576px;top:1306px;line-height:10px;">32.00MB</div>
<div class="t" style="font-size:8px;color:#69707d;letter-spacing:-0.033px;right:607.533px;top:1286px;line-height:10px;">64.00MB</div>
<div class="t" style="font-size:8px;color:#69707d;letter-spacing:-0.047px;right:607.547px;top:1265px;line-height:10px;">96.00MB</div>
<div class="t" style="font-size:8px;color:#69707d;letter-spacing:-0.209px;right:607.709px;top:1245px;line-height:10px;">128.00MB</div>
<div class="t" style="font-size:8px;color:#69707d;letter-spacing:-0.171px;right:607.671px;top:1224px;line-height:10px;">160.00MB</div>
<div class="t" style="font-size:8px;color:#69707d;letter-spacing:-0.209px;right:607.709px;top:1204px;line-height:10px;">192.00MB</div>
<div class="t" style="font-size:8px;color:#69707d;letter-spacing:-0.059px;right:607.559px;top:1183px;line-height:10px;">224.00MB</div>
<div class="t" style="font-size:8px;color:#69707d;letter-spacing:-0.059px;right:607.559px;top:1163px;line-height:10px;">256.00MB</div>
<div class="t" style="font-size:8px;color:#69707d;letter-spacing:-0.046px;right:607.546px;top:1142px;line-height:10px;">288.00MB</div>
<div class="t" style="font-size:8px;color:#69707d;letter-spacing:-0.034px;right:607.534px;top:1122px;line-height:10px;">320.00MB</div>
<div class="t" style="font-size:8px;color:#69707d;letter-spacing:-0.059px;right:607.559px;top:1101px;line-height:10px;">352.00MB</div>
<div class="t" style="font-size:8px;color:#69707d;letter-spacing:-0.206px;left:767.4px;top:1334px;line-height:10px;">17:30</div>
<div class="t" style="font-size:8px;color:#69707d;letter-spacing:0.012px;left:767.5px;top:1342px;line-height:10px;">August 3, 2023</div>
<div class="t" style="font-size:8px;color:#69707d;letter-spacing:-0.146px;left:816.8px;top:1334px;line-height:10px;">18:30</div>
<div class="t" style="font-size:8px;color:#69707d;letter-spacing:-0.146px;left:868.87px;top:1334px;line-height:10px;">19:30</div>
<div class="t" style="font-size:8px;color:#69707d;letter-spacing:0.094px;left:920.94px;top:1334px;line-height:10px;">20:30</div>
<div class="t" style="font-size:8px;color:#69707d;letter-spacing:-0.186px;left:973.01px;top:1334px;line-height:10px;">21:30</div>
<div class="t" style="font-size:8px;color:#69707d;letter-spacing:0.034px;left:1025.08px;top:1334px;line-height:10px;">22:30</div>
<div class="t" style="font-size:8px;color:#69707d;letter-spacing:0.074px;left:1077.15px;top:1334px;line-height:10px;">23:30</div>
<div class="t" style="font-size:8px;color:#69707d;letter-spacing:0.154px;left:1129.22px;top:1334px;line-height:10px;">00:30</div>
<div class="t" style="font-size:8px;color:#69707d;letter-spacing:0.012px;left:1103.68px;top:1342px;line-height:10px;">August 4, 2023</div>
<div class="t" style="font-size:9.2px;color:#343741;font-weight:700;left:704px;top:1219.3px;line-height:12px;transform:translate(-50%,-50%) rotate(-90deg);">Process private bytes</div>
<div class="t" style="font-size:9.2px;color:#343741;font-weight:700;letter-spacing:0.068px;left:981.034px;transform:translateX(-50%);top:1356px;line-height:12px;">@timestamp per 10 minutes</div>
<div class="t" style="font-size:9.3px;color:#535966;letter-spacing:0.152px;left:1223.1px;top:1106px;line-height:12px;">3d899f120bebb3ad80d…</div>
</div>
</body></html>
